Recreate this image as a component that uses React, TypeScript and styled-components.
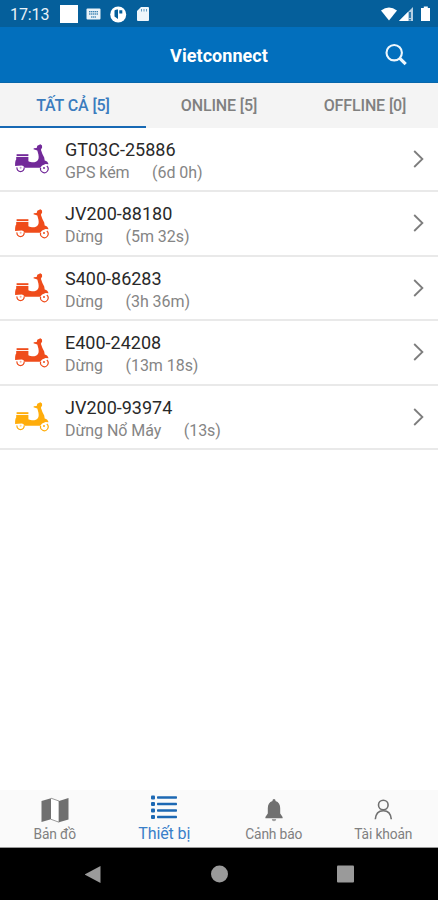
import React from "react";
import styled, { createGlobalStyle } from "styled-components";

const GlobalStyle = createGlobalStyle`
  * { box-sizing: border-box; }
  body { margin: 0; background: #fff; font-family: Roboto, "Noto Sans", sans-serif; }
`;

const Screen = styled.div`
  width: 438px;
  height: 900px;
  display: flex;
  flex-direction: column;
  background: #fff;
  overflow: hidden;
`;

const StatusBar = styled.div`
  height: 27px;
  flex: none;
  display: flex;
  align-items: center;
  justify-content: space-between;
  padding: 1px 6px 0 10px;
  background: #055f9b;
  color: #e9f2f8;
`;

const StatusGroup = styled.div<{ $gap: number }>`
  display: flex;
  align-items: center;
  gap: ${(p) => p.$gap}px;
  svg { display: block; }
`;

const Clock = styled.span`
  font-size: 16px;
  line-height: 20px;
  width: 40px;
  letter-spacing: -0.1px;
  margin: 1px 10px 0 0;
`;

const NotificationIcons = styled.div`
  display: flex;
  align-items: center;
  gap: 8px;
  svg { display: block; }
`;

const Header = styled.header`
  height: 56px;
  flex: none;
  display: grid;
  grid-template-columns: 84px 1fr 84px;
  align-items: center;
  justify-items: center;
  background: #026fbd;
  border-bottom: 1px solid #0767ab;
  color: #fff;
`;

const Title = styled.h1`
  grid-column: 2;
  margin: 3px 0 0;
  font-size: 18px;
  line-height: 24px;
  font-weight: 700;
  letter-spacing: 0.05px;
`;

const SearchButton = styled.button`
  display: flex;
  padding: 0;
  border: 0;
  background: none;
  color: #eef7fd;
`;

const Tabs = styled.nav`
  height: 44.5px;
  flex: none;
  display: grid;
  grid-template-columns: repeat(3, 1fr);
  background: #f4f4f4;
`;

const Tab = styled.button<{ $active?: boolean }>`
  border: 0;
  border-bottom: 2px solid ${(p) => (p.$active ? "#1769b4" : "transparent")};
  padding: 4px 0 0;
  background: none;
  font: 500 16px/20px Roboto, "Noto Sans", sans-serif;
  letter-spacing: -0.12px;
  color: ${(p) => (p.$active ? "#3b7cbe" : "#808080")};
`;

const List = styled.main`
  flex: 1;
  display: flex;
  flex-direction: column;
`;

const Row = styled.div`
  height: 64.5px;
  flex: none;
  display: grid;
  grid-template-columns: 65px 1fr 40px;
  align-items: center;
  border-bottom: 2px solid #e9e9e9;
  svg { display: block; }
`;

const VehicleCell = styled.div<{ $color: string }>`
  padding-left: 14px;
  color: ${(p) => p.$color};
`;

const Details = styled.div`
  padding-top: 4px;
`;

const Name = styled.div`
  font-size: 18px;
  line-height: 23px;
  letter-spacing: 0;
  color: #292929;
`;

const Status = styled.div`
  display: flex;
  gap: 22.5px;
  font-size: 16px;
  line-height: 23px;
  letter-spacing: -0.05px;
  color: #858585;
`;

const Chevron = styled.div`
  padding-left: 14.5px;
  color: #7d7d7d;
`;

const BottomBar = styled.nav`
  height: 58px;
  flex: none;
  display: grid;
  grid-template-columns: repeat(4, 1fr);
  background: #fafafa;
  border-bottom: 1px solid #999;
`;

const BottomItem = styled.button<{ $active?: boolean }>`
  display: flex;
  flex-direction: column;
  align-items: center;
  border: 0;
  padding: ${(p) => (p.$active ? "5px 0 0" : "7px 0 0")};
  background: none;
  color: ${(p) => (p.$active ? "#1c68b3" : "#707070")};
  svg { display: block; }
`;

const BottomLabel = styled.span<{ $active?: boolean }>`
  font-family: Roboto, "Noto Sans", sans-serif;
  font-size: ${(p) => (p.$active ? 16 : 13.8)}px;
  line-height: 18px;
  letter-spacing: ${(p) => (p.$active ? -0.1 : -0.15)}px;
  margin-top: ${(p) => (p.$active ? 5 : 2)}px;
  color: ${(p) => (p.$active ? "#397fc9" : "#808080")};
`;

const SystemNav = styled.div`
  height: 52px;
  flex: none;
  display: flex;
  justify-content: center;
  align-items: center;
  gap: 109px;
  background: #000;
  svg { display: block; }
`;

const Scooter = () => (
  <svg width="36" height="31" viewBox="0 0 36 31" fill="currentColor">
    <path d="M2.6 11.2h11.8v1.9H2.6z" />
    <path d="M2.2 14.1H14.4V18.2C16.2 18.9 18.4 19.6 20.4 19.2C22.5 18.8 24.2 17.4 24.6 15.2C25 12.7 24.2 10.4 23.3 7.4L19.5 6.3L19.8 5.2L22.7 5.1L23.3 2.7L26.4 1.2L28 2.4L28.1 4.5L26.9 6.7L28.4 11.1L30.2 14.5L30.7 17.6C32.7 18.2 34.2 19.4 34.5 21.3L31.6 21.1L28.1 22.5L26.2 24.8H10.7C10.1 23.6 9 22.7 7.6 22.5L1.1 23.1C1.1 19.9 1.2 17.6 2.2 16.5Z" />
    <path d="M3 24.4A3.6 3.6 0 1 0 10.1 24.4M32.8 23A3.8 3.8 0 1 1 26.7 24.7" fill="none" stroke="currentColor" strokeWidth="1.2" />
    <circle cx="6.6" cy="24.8" r="1" opacity=".45" />
    <circle cx="30" cy="25" r="1" />
  </svg>
);

const SearchIcon = () => (
  <svg width="24" height="24" viewBox="0 0 24 24" fill="none" stroke="currentColor">
    <circle cx="10.2" cy="9.7" r="7.7" strokeWidth="2.1" />
    <path d="M15.6 15.1L21.7 21.2" strokeWidth="3.2" />
  </svg>
);

const ChevronIcon = () => (
  <svg width="12" height="18" viewBox="0 0 12 18" fill="none" stroke="currentColor" strokeWidth="1.8">
    <path d="M1.2 1L9.4 9L1.2 17" />
  </svg>
);

const MapIcon = () => (
  <svg width="28" height="26" viewBox="0 0 28 26" fill="currentColor">
    <path d="M.5 4L10 1.2V22.3L.5 25ZM18 4L27.5 1V22.4L18 25.2Z" />
    <path d="M10 1.2L18 4V25.2L10 22.3" fill="#fff" stroke="currentColor" strokeWidth=".7" />
  </svg>
);

const ListIcon = () => (
  <svg width="28" height="25" viewBox="0 0 28 25" fill="currentColor">
    {[0.5, 7, 13.5, 20].map((y) => (
      <g key={y}>
        <rect x="1" y={y} width="4" height="4" rx="1" />
        <rect x="7" y={y + 0.7} width="20" height="2.5" rx=".7" />
      </g>
    ))}
  </svg>
);

const BellIcon = () => (
  <svg width="20" height="26" viewBox="0 0 20 26" fill="currentColor">
    <path d="M8.5 4V3.5a1.5 1.5 0 0 1 3 0V4C14.8 5 16.2 7.8 16.2 11.3V16.6L18.6 20V21.2H1.4V20L3.8 16.6V11.3C3.8 7.8 5.2 5 8.5 4Z" />
    <path d="M7.8 22h4.4a2.2 2.2 0 0 1-4.4 0Z" opacity=".65" />
  </svg>
);

const PersonIcon = () => (
  <svg width="20" height="26" viewBox="0 0 20 26" fill="none" stroke="currentColor" strokeWidth="1.6">
    <circle cx="10.3" cy="8" r="4.8" />
    <path d="M2.3 22.3C2.7 16.8 5.6 13.7 10.3 13.7S17.9 16.8 18.3 22.3" />
  </svg>
);

const devices = [
  { name: "GT03C-25886", status: "GPS kém", time: "(6d 0h)", color: "#722999" },
  { name: "JV200-88180", status: "Dừng", time: "(5m 32s)", color: "#ef4c1b" },
  { name: "S400-86283", status: "Dừng", time: "(3h 36m)", color: "#ef4c1b" },
  { name: "E400-24208", status: "Dừng", time: "(13m 18s)", color: "#ef4c1b" },
  { name: "JV200-93974", status: "Dừng Nổ Máy", time: "(13s)", color: "#ffad0b" },
];

const destinations = [
  { label: "Bản đồ", icon: <MapIcon /> },
  { label: "Thiết bị", icon: <ListIcon />, active: true },
  { label: "Cảnh báo", icon: <BellIcon /> },
  { label: "Tài khoản", icon: <PersonIcon /> },
];

export default function App() {
  return (
    <>
      <GlobalStyle />
      <Screen>
        <StatusBar>
          <StatusGroup $gap={0}>
            <Clock>17:13</Clock>
            <NotificationIcons>
              <svg width="18" height="18"><rect width="18" height="18" fill="#fff" /></svg>
              <svg width="16" height="12" viewBox="0 0 16 12">
                <rect x=".5" y=".5" width="14" height="11" rx="1" fill="#e9f2f8" />
                <path d="M3 3.7h9M3 6h9M5 9h5" stroke="#055f9b" strokeWidth="1.1" strokeDasharray="1.5 .5" />
              </svg>
              <svg width="17" height="17" viewBox="0 0 17 17">
                <circle cx="8.2" cy="8.5" r="8" fill="#fff" />
                <path d="M4.5 4.5Q6 3.2 8 3.5V13L4.5 10.5ZM9.3 4.2H12.3V7.5H9.3Z" fill="#055f9b" />
              </svg>
              <svg width="16" height="16" viewBox="0 0 16 16">
                <path d="M6 1H13Q14 1 14 2V14Q14 15 13 15H3Q2 15 2 14V5Z" fill="#eef6fb" />
                <path d="M6.5 3v2.5M9 3v2.5M11.5 3v2.5" stroke="#055f9b" strokeOpacity=".6" />
              </svg>
            </NotificationIcons>
          </StatusGroup>
          <StatusGroup $gap={1}>
            <svg width="17" height="16" viewBox="0 0 17 16"><path d="M0 4.5Q8-1.5 16 4.5L8 14.5Z" fill="#fff" /></svg>
            <svg width="17" height="16" viewBox="0 0 17 16">
              <path d="M0 15L14 1V15Z" fill="#b5cfe2" />
              <path d="M0 15L9 6V15Z" fill="#fff" />
              <path d="M11 6v6M11 13v1.5" stroke="#055f9b" strokeWidth="1.5" />
            </svg>
            <svg width="15" height="16" viewBox="0 0 15 16"><path d="M6.8.5h4v1.6h2.2V15h-9V2.1h2.8Z" fill="#fff" /></svg>
          </StatusGroup>
        </StatusBar>
        <Header>
          <Title>Vietconnect</Title>
          <SearchButton aria-label="Search"><SearchIcon /></SearchButton>
        </Header>
        <Tabs>
          <Tab $active>TẤT CẢ [5]</Tab>
          <Tab>ONLINE [5]</Tab>
          <Tab>OFFLINE [0]</Tab>
        </Tabs>
        <List>
          {devices.map((d) => (
            <Row key={d.name}>
              <VehicleCell $color={d.color}><Scooter /></VehicleCell>
              <Details>
                <Name>{d.name}</Name>
                <Status><span>{d.status}</span><span>{d.time}</span></Status>
              </Details>
              <Chevron><ChevronIcon /></Chevron>
            </Row>
          ))}
        </List>
        <BottomBar>
          {destinations.map((d) => (
            <BottomItem key={d.label} $active={d.active}>
              {d.icon}
              <BottomLabel $active={d.active}>{d.label}</BottomLabel>
            </BottomItem>
          ))}
        </BottomBar>
        <SystemNav>
          <svg width="17" height="19" viewBox="0 0 17 19"><path d="M15.5 1V18L-.5 9.5Z" fill="#9a9a9a" /></svg>
          <svg width="17" height="18" viewBox="0 0 17 18"><circle cx="8.5" cy="9" r="8.5" fill="#9a9a9a" /></svg>
          <svg width="17" height="18" viewBox="0 0 17 18"><rect y=".5" width="17" height="17" rx="1" fill="#9a9a9a" /></svg>
        </SystemNav>
      </Screen>
    </>
  );
}
